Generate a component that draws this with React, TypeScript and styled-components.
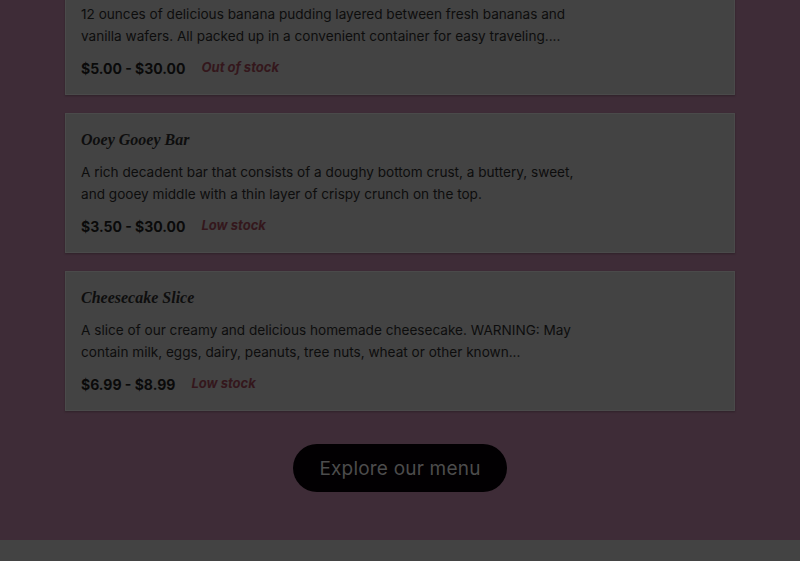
import React from "react";
import styled, { createGlobalStyle } from "styled-components";

const Global = createGlobalStyle`
  html, body { margin: 0; padding: 0; background: #3e2c37; }
  body { overflow: hidden; font-family: "Inter", "Liberation Sans", sans-serif; }
`;

const Page = styled.div`
  width: 800px;
  height: 561px;
  overflow: hidden;
  background: #3e2c37;
  display: flex;
  flex-direction: column;
`;

const Section = styled.section`
  display: flex;
  flex-direction: column;
  align-items: center;
  padding: 0 65px 48px;
  margin-top: -45px;
`;

const List = styled.div`
  align-self: stretch;
  display: flex;
  flex-direction: column;
  gap: 18px;
`;

const Card = styled.article`
  height: 140px;
  box-sizing: border-box;
  background: #434343;
  border: 1px solid #4a4a4a;
  box-shadow: 0 1px 2px rgba(0, 0, 0, 0.25);
  padding: 16px 15px 0;
  display: flex;
  flex-direction: column;
`;

const Title = styled.h3`
  margin: 0;
  font-family: "Liberation Serif", "DejaVu Serif", serif;
  font-style: italic;
  font-weight: 700;
  font-size: 16px;
  line-height: 20px;
  color: #0e0e0e;
`;

const Desc = styled.p`
  margin: 11px 0 0;
  max-width: 520px;
  font-family: "Inter", "Liberation Sans", sans-serif;
  font-size: 13.6px;
  line-height: 22px;
  color: #0d0d0d;
`;

const PriceRow = styled.div`
  margin-top: 10px;
  display: flex;
  align-items: center;
  gap: 16px;
  height: 22px;
`;

const Price = styled.span`
  font-family: "Inter", "Liberation Sans", sans-serif;
  font-weight: 700;
  font-size: 14px;
  color: #0a0a0a;
`;

const Stock = styled.span`
  font-family: "Inter", "Liberation Sans", sans-serif;
  font-weight: 700;
  font-style: italic;
  font-size: 13px;
  color: #34171c;
  margin-top: -3px;
`;

const Button = styled.button`
  margin-top: 33px;
  width: 214px;
  height: 48px;
  border: none;
  border-radius: 24px;
  background: #020002;
  color: #4c4c4c;
  font-family: "Inter", "Liberation Sans", sans-serif;
  font-size: 19px;
  letter-spacing: 0.2px;
  cursor: pointer;
`;

const Footer = styled.footer`
  flex: 1;
  background: #434343;
`;

const items = [
  {
    title: "Banana Pudding",
    desc: "12 ounces of delicious banana pudding layered between fresh bananas and vanilla wafers. All packed up in a convenient container for easy traveling....",
    price: "$5.00 - $30.00",
    stock: "Out of stock",
  },
  {
    title: "Ooey Gooey Bar",
    desc: "A rich decadent bar that consists of a doughy bottom crust, a buttery, sweet, and gooey middle with a thin layer of crispy crunch on the top.",
    price: "$3.50 - $30.00",
    stock: "Low stock",
  },
  {
    title: "Cheesecake Slice",
    desc: "A slice of our creamy and delicious homemade cheesecake. WARNING: May contain milk, eggs, dairy, peanuts, tree nuts, wheat or other known...",
    price: "$6.99 - $8.99",
    stock: "Low stock",
  },
];

export default function App() {
  return (
    <Page>
      <Global />
      <Section>
        <List>
          {items.map((it) => (
            <Card key={it.title}>
              <Title>{it.title}</Title>
              <Desc>{it.desc}</Desc>
              <PriceRow>
                <Price>{it.price}</Price>
                <Stock>{it.stock}</Stock>
              </PriceRow>
            </Card>
          ))}
        </List>
        <Button>Explore our menu</Button>
      </Section>
      <Footer />
    </Page>
  );
}
